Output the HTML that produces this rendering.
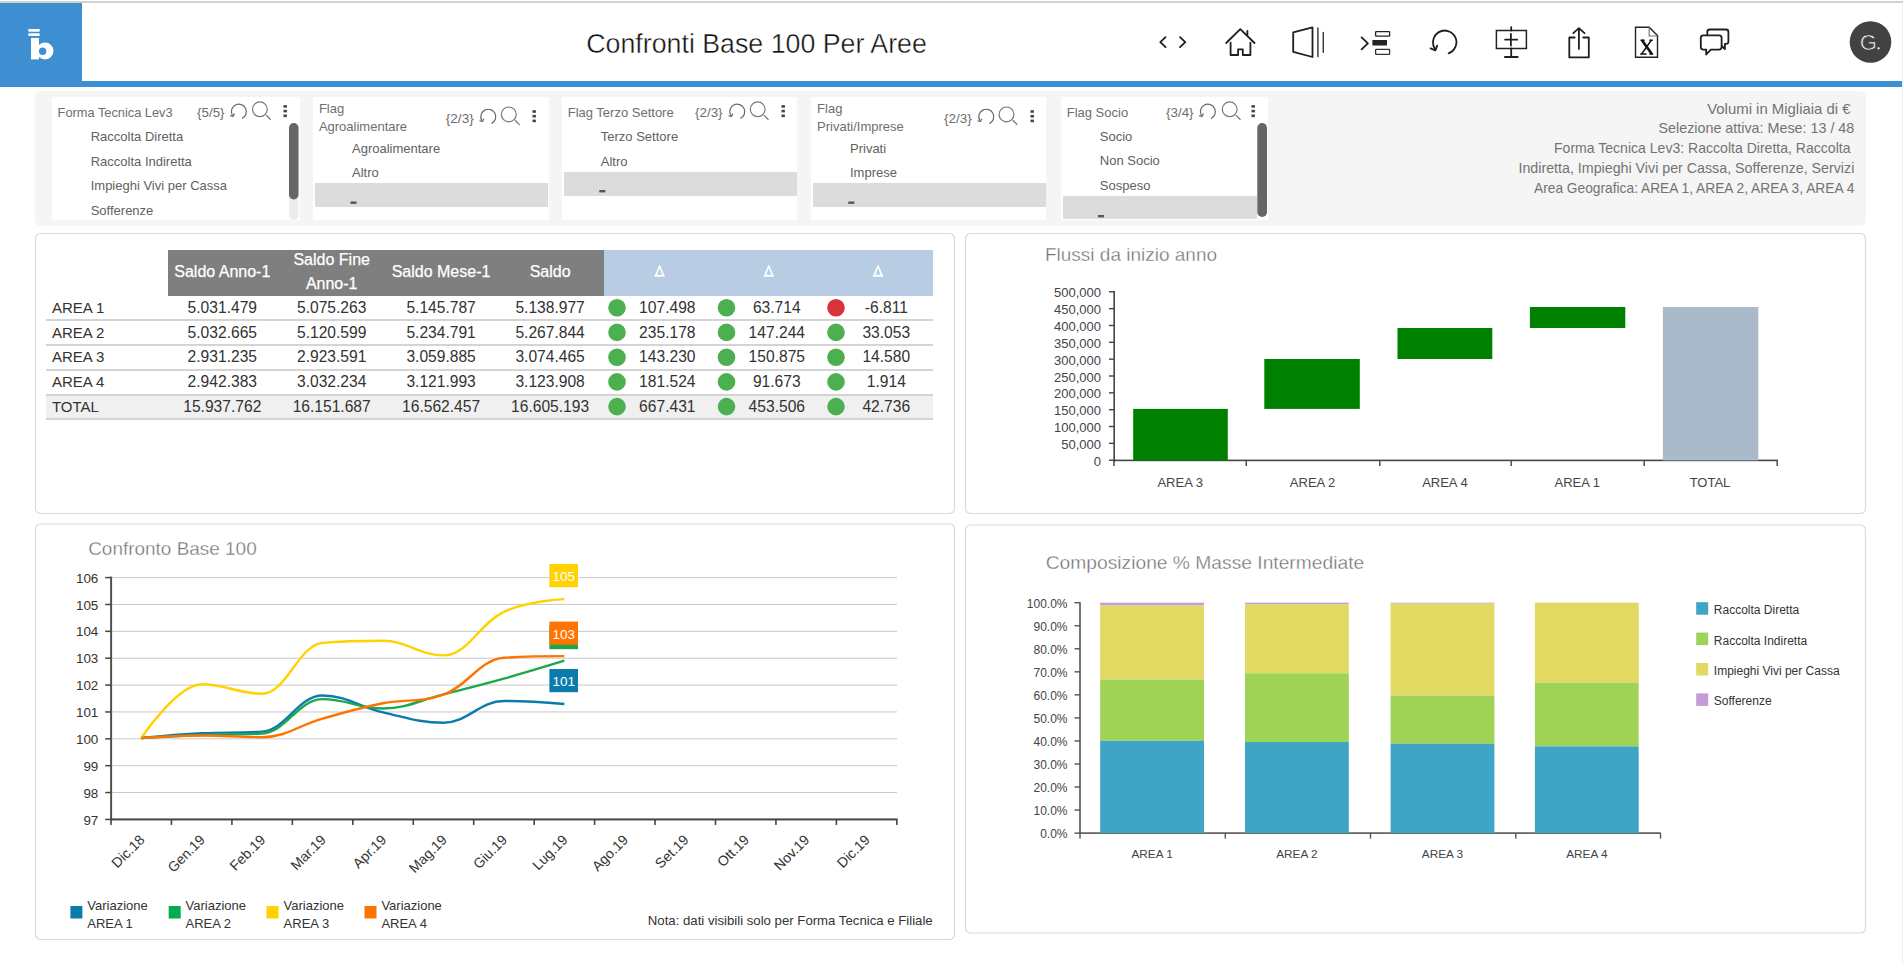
<!DOCTYPE html>
<html><head><meta charset="utf-8"><title>Confronti Base 100 Per Aree</title>
<style>
html,body{margin:0;padding:0;background:#fff;width:1903px;height:965px;overflow:hidden}
svg{position:absolute;left:0;top:0;font-family:"Liberation Sans", sans-serif}
</style></head><body>
<svg width="1903" height="965" viewBox="0 0 1903 965">
<rect x="0" y="1" width="1903" height="2" fill="#d3d0d0"/>
<rect x="0" y="3" width="82" height="78" fill="#3d8fd1"/>
<rect x="0" y="81" width="1903" height="6" fill="#3d8fd1"/>
<rect x="1902" y="3" width="1" height="962" fill="#f0f1f1"/>
<rect x="28.2" y="29.1" width="11.6" height="2.7" rx="1" fill="#fff"/>
<rect x="28.2" y="33.2" width="11.6" height="2.7" rx="1" fill="#fff"/>
<rect x="31" y="38" width="8" height="21.4" fill="#fff"/>
<circle cx="45" cy="51" r="8.5" fill="#fff"/>
<circle cx="42.6" cy="51.2" r="3.7" fill="#3d8fd1"/>
<text x="586.3" y="53" font-size="27" fill="#111" stroke="#fff" stroke-width="0.4" textLength="340.5" lengthAdjust="spacingAndGlyphs">Confronti Base 100 Per Aree</text>
<path d="M1165.6,37.2 L1160.3,42.2 L1165.6,47.2 M1180,37.2 L1185.3,42.2 L1180,47.2" fill="none" stroke="#1e1e1e" stroke-width="1.8" stroke-linecap="round" stroke-linejoin="round"/>
<path d="M1226.2,43 L1240.3,29.2 L1254.5,43 M1247.4,31 V35.5 M1230.6,42.7 V55 H1238.1 V49.4 H1242.8 V55 H1250.4 V42.7" fill="none" stroke="#1e1e1e" stroke-width="1.8" stroke-linecap="round" stroke-linejoin="round"/>
<path d="M1293.2,32.4 L1312.5,27.4 L1312.5,57 L1293.2,51.8 Z" fill="none" stroke="#1e1e1e" stroke-width="1.8" stroke-linecap="round" stroke-linejoin="round" stroke-width="1.6"/>
<path d="M1317.9,28 V56.4" stroke="#555" stroke-width="1.7" stroke-linecap="round"/>
<path d="M1323.3,32.4 V52.2" stroke="#333" stroke-width="1.4" stroke-linecap="round"/>
<path d="M1361.6,37.4 L1367.9,43.4 L1361.6,49.4" fill="none" stroke="#1e1e1e" stroke-width="1.8" stroke-linecap="round" stroke-linejoin="round" stroke-width="1.5" stroke="#333"/>
<rect x="1375.6" y="31.6" width="14" height="4.6" rx="0.6" fill="none" stroke="#222" stroke-width="1.3"/>
<rect x="1372.4" y="39.9" width="14.6" height="5.7" rx="0.5" fill="#222"/>
<rect x="1375.6" y="49.4" width="14" height="5" rx="0.6" fill="none" stroke="#333" stroke-width="1.3"/>
<path d="M1448.6,53.3 A11.7,11.7 0 1 0 1435.6,49.6" fill="none" stroke="#1e1e1e" stroke-width="1.8" stroke-linecap="round" stroke-linejoin="round"/>
<path d="M1430.6,48.4 L1435.3,50.3 L1437.2,45.6" fill="none" stroke="#1e1e1e" stroke-width="1.8" stroke-linecap="round" stroke-linejoin="round"/>
<rect x="1496.4" y="30.5" width="30" height="18" fill="none" stroke="#222" stroke-width="1.5"/>
<path d="M1511.2,27.2 V30.5 M1511.2,48.5 V57 M1504.9,57 H1517.7 M1505.1,39.7 H1517.2 M1510.9,34 V45.6" fill="none" stroke="#1e1e1e" stroke-width="1.8" stroke-linecap="round" stroke-linejoin="round" stroke-width="1.5"/>
<path d="M1574.7,37.5 H1569.3 V57.4 H1588.8 V37.5 H1583.2 M1578.9,28.4 V48.9 M1573.3,33.2 L1578.9,28.2 L1584.5,33.2" fill="none" stroke="#1e1e1e" stroke-width="1.8" stroke-linecap="round" stroke-linejoin="round" stroke-width="1.4" stroke="#333" stroke-linecap="butt"/>
<path d="M1635.5,27.2 H1649.2 L1657.5,35.5 V57.2 H1635.5 Z" fill="none" stroke="#222" stroke-width="1.4" stroke-linejoin="miter"/>
<path d="M1649.2,27.6 V36 H1657.2" fill="none" stroke="#777" stroke-width="1.2"/>
<path d="M1641.8,40 L1651.8,54" stroke="#111" stroke-width="2.6"/>
<path d="M1651.5,40 L1641.6,54" stroke="#111" stroke-width="1.4"/>
<path d="M1640.2,54 H1646.6 M1649.4,54 H1653.2 M1640.5,40.2 H1644.6 M1649.4,40.2 H1652.8" stroke="#111" stroke-width="1.4"/>
<path d="M1707.3,35.3 V32 Q1707.3,29.5 1709.8,29.5 H1726 Q1728.4,29.5 1728.4,32 V41.4 Q1728.4,43.8 1726,43.8 H1724.9 V49 L1721.8,46" fill="none" stroke="#1e1e1e" stroke-width="1.8" stroke-linecap="round" stroke-linejoin="round" stroke-width="1.5" stroke="#333"/>
<path d="M1703.3,35.3 H1719.1 Q1721.6,35.3 1721.6,37.8 V47.1 Q1721.6,49.6 1719.1,49.6 H1710.8 L1706.2,54.5 V49.6 H1703.3 Q1700.8,49.6 1700.8,47.1 V37.8 Q1700.8,35.3 1703.3,35.3 Z" fill="none" stroke="#1e1e1e" stroke-width="1.8" stroke-linecap="round" stroke-linejoin="round" stroke-width="1.5" stroke="#333"/>
<circle cx="1870.5" cy="42" r="20.8" fill="#424242"/>
<text x="1859.8" y="49.8" font-size="22" fill="#fff" stroke="#424242" stroke-width="0.7">G</text>
<circle cx="1878.6" cy="48.3" r="1.1" fill="#fff"/>
<rect x="35" y="91" width="1831" height="135" rx="6" fill="#f5f5f5"/>
<rect x="52" y="97" width="248" height="123" fill="#fff"/>
<rect x="313" y="97" width="236" height="123" fill="#fff"/>
<rect x="562" y="97" width="235" height="123" fill="#fff"/>
<rect x="811" y="97" width="235" height="123" fill="#fff"/>
<rect x="1061" y="97" width="207" height="123" fill="#fff"/>
<text x="57.6" y="117.3" font-size="12.8" fill="#6e6e6e" text-anchor="start" >Forma Tecnica Lev3</text>
<text x="197.1" y="116.9" font-size="12.8" fill="#6e6e6e" textLength="27.4" lengthAdjust="spacingAndGlyphs">{5/5}</text>
<path d="M242.0,118.5 A7.5,7.5 0 1 0 232.29999999999998,115.30000000000001" fill="none" stroke="#6a6a6a" stroke-width="1.2"/>
<path d="M230.2,115.60000000000001 L232.9,116.4 L234.5,113.7" fill="none" stroke="#6a6a6a" stroke-width="1.3"/>
<circle cx="259.9" cy="109.30000000000001" r="7.4" fill="none" stroke="#777" stroke-width="1.2"/>
<path d="M266.2,115.10000000000001 L270.7,119.80000000000001" stroke="#777" stroke-width="1.3"/>
<rect x="283.5" y="105.10000000000001" width="3.4" height="2.6" fill="#444"/>
<rect x="283.5" y="109.80000000000001" width="3.4" height="2.6" fill="#444"/>
<rect x="283.5" y="114.50000000000001" width="3.4" height="2.6" fill="#444"/>
<text x="90.7" y="141.0" font-size="13" fill="#616161" text-anchor="start" >Raccolta Diretta</text>
<text x="90.7" y="165.5" font-size="13" fill="#616161" text-anchor="start" >Raccolta Indiretta</text>
<text x="90.7" y="190.0" font-size="13" fill="#616161" text-anchor="start" >Impieghi Vivi per Cassa</text>
<text x="90.7" y="214.5" font-size="13" fill="#616161" text-anchor="start" >Sofferenze</text>
<rect x="289" y="123" width="9.5" height="97" rx="4.7" fill="#ececec"/>
<rect x="289" y="123" width="9.5" height="76.5" rx="4.7" fill="#666"/>
<text x="318.9" y="113.2" font-size="13" fill="#6e6e6e" text-anchor="start" >Flag</text>
<text x="318.9" y="130.6" font-size="13" fill="#6e6e6e" text-anchor="start" >Agroalimentare</text>
<text x="445.8" y="123" font-size="12.8" fill="#6e6e6e" textLength="27.9" lengthAdjust="spacingAndGlyphs">{2/3}</text>
<path d="M491.4,123.6 A7.5,7.5 0 1 0 481.7,120.4" fill="none" stroke="#6a6a6a" stroke-width="1.2"/>
<path d="M479.6,120.7 L482.3,121.5 L483.9,118.8" fill="none" stroke="#6a6a6a" stroke-width="1.3"/>
<circle cx="508.8" cy="114.4" r="7.4" fill="none" stroke="#777" stroke-width="1.2"/>
<path d="M515.1,120.2 L519.6,124.9" stroke="#777" stroke-width="1.3"/>
<rect x="532.5" y="110.2" width="3.4" height="2.6" fill="#444"/>
<rect x="532.5" y="114.9" width="3.4" height="2.6" fill="#444"/>
<rect x="532.5" y="119.60000000000001" width="3.4" height="2.6" fill="#444"/>
<rect x="315" y="183" width="233" height="24" fill="#dcdcdc"/>
<text x="352" y="152.7" font-size="13" fill="#616161" text-anchor="start" >Agroalimentare</text>
<text x="352" y="176.8" font-size="13" fill="#616161" text-anchor="start" >Altro</text>
<rect x="350.5" y="201.5" width="6" height="2.4" fill="#555"/>
<text x="567.7" y="116.8" font-size="13" fill="#6e6e6e" text-anchor="start" >Flag Terzo Settore</text>
<text x="695" y="116.9" font-size="12.8" fill="#6e6e6e" textLength="27.6" lengthAdjust="spacingAndGlyphs">{2/3}</text>
<path d="M740.4,118.5 A7.5,7.5 0 1 0 730.7,115.30000000000001" fill="none" stroke="#6a6a6a" stroke-width="1.2"/>
<path d="M728.6,115.60000000000001 L731.3,116.4 L732.9,113.7" fill="none" stroke="#6a6a6a" stroke-width="1.3"/>
<circle cx="757.7" cy="109.30000000000001" r="7.4" fill="none" stroke="#777" stroke-width="1.2"/>
<path d="M764.0,115.10000000000001 L768.5,119.80000000000001" stroke="#777" stroke-width="1.3"/>
<rect x="781.5" y="105.10000000000001" width="3.4" height="2.6" fill="#444"/>
<rect x="781.5" y="109.80000000000001" width="3.4" height="2.6" fill="#444"/>
<rect x="781.5" y="114.50000000000001" width="3.4" height="2.6" fill="#444"/>
<text x="600.8" y="140.8" font-size="13" fill="#616161" text-anchor="start" >Terzo Settore</text>
<text x="600.8" y="165.5" font-size="13" fill="#616161" text-anchor="start" >Altro</text>
<rect x="564" y="172" width="233" height="24" fill="#dcdcdc"/>
<rect x="599.3" y="190" width="6" height="2.4" fill="#555"/>
<text x="817.1" y="113.2" font-size="13" fill="#6e6e6e" text-anchor="start" >Flag</text>
<text x="817.1" y="130.6" font-size="13" fill="#6e6e6e" text-anchor="start" >Privati/Imprese</text>
<text x="944" y="123" font-size="12.8" fill="#6e6e6e" textLength="27.9" lengthAdjust="spacingAndGlyphs">{2/3}</text>
<path d="M989.4,123.6 A7.5,7.5 0 1 0 979.7,120.4" fill="none" stroke="#6a6a6a" stroke-width="1.2"/>
<path d="M977.6,120.7 L980.3,121.5 L981.9,118.8" fill="none" stroke="#6a6a6a" stroke-width="1.3"/>
<circle cx="1006.5" cy="114.4" r="7.4" fill="none" stroke="#777" stroke-width="1.2"/>
<path d="M1012.8,120.2 L1017.3,124.9" stroke="#777" stroke-width="1.3"/>
<rect x="1030.5" y="110.2" width="3.4" height="2.6" fill="#444"/>
<rect x="1030.5" y="114.9" width="3.4" height="2.6" fill="#444"/>
<rect x="1030.5" y="119.60000000000001" width="3.4" height="2.6" fill="#444"/>
<rect x="813" y="183" width="233" height="24" fill="#dcdcdc"/>
<text x="850" y="152.7" font-size="13" fill="#616161" text-anchor="start" >Privati</text>
<text x="850" y="176.8" font-size="13" fill="#616161" text-anchor="start" >Imprese</text>
<rect x="848.3" y="201.5" width="6" height="2.4" fill="#555"/>
<text x="1066.7" y="116.8" font-size="13" fill="#6e6e6e" text-anchor="start" >Flag Socio</text>
<text x="1166" y="116.9" font-size="12.8" fill="#6e6e6e" textLength="27.6" lengthAdjust="spacingAndGlyphs">{3/4}</text>
<path d="M1211.0,118.5 A7.5,7.5 0 1 0 1201.3,115.30000000000001" fill="none" stroke="#6a6a6a" stroke-width="1.2"/>
<path d="M1199.1999999999998,115.60000000000001 L1201.8999999999999,116.4 L1203.5,113.7" fill="none" stroke="#6a6a6a" stroke-width="1.3"/>
<circle cx="1229.7" cy="109.30000000000001" r="7.4" fill="none" stroke="#777" stroke-width="1.2"/>
<path d="M1236.0,115.10000000000001 L1240.5,119.80000000000001" stroke="#777" stroke-width="1.3"/>
<rect x="1251.5" y="105.10000000000001" width="3.4" height="2.6" fill="#444"/>
<rect x="1251.5" y="109.80000000000001" width="3.4" height="2.6" fill="#444"/>
<rect x="1251.5" y="114.50000000000001" width="3.4" height="2.6" fill="#444"/>
<rect x="1063" y="196" width="194" height="23" fill="#dcdcdc"/>
<text x="1099.8" y="140.8" font-size="13" fill="#616161" text-anchor="start" >Socio</text>
<text x="1099.8" y="165.4" font-size="13" fill="#616161" text-anchor="start" >Non Socio</text>
<text x="1099.8" y="190.0" font-size="13" fill="#616161" text-anchor="start" >Sospeso</text>
<rect x="1098" y="215" width="6" height="2.4" fill="#555"/>
<rect x="1257.3" y="123" width="9.7" height="94" rx="4.8" fill="#666"/>
<text x="1707.2" y="113.5" font-size="14.2" fill="#737373" textLength="143.4" lengthAdjust="spacingAndGlyphs">Volumi in Migliaia di €</text>
<text x="1658.5" y="133.3" font-size="14.2" fill="#737373" textLength="195.8" lengthAdjust="spacingAndGlyphs">Selezione attiva: Mese: 13 / 48</text>
<text x="1554" y="153.1" font-size="14.2" fill="#737373" textLength="296.5" lengthAdjust="spacingAndGlyphs">Forma Tecnica Lev3: Raccolta Diretta, Raccolta</text>
<text x="1518.5" y="172.9" font-size="14.2" fill="#737373" textLength="335.8" lengthAdjust="spacingAndGlyphs">Indiretta, Impieghi Vivi per Cassa, Sofferenze, Servizi</text>
<text x="1534" y="192.7" font-size="14.2" fill="#737373" textLength="320.3" lengthAdjust="spacingAndGlyphs">Area Geografica: AREA 1, AREA 2, AREA 3, AREA 4</text>
<rect x="35.5" y="233.5" width="919" height="280" rx="5" fill="#fff" stroke="#dadada" stroke-width="1.2"/>
<rect x="965.5" y="233.5" width="900" height="280" rx="5" fill="#fff" stroke="#dadada" stroke-width="1.2"/>
<rect x="35.5" y="524" width="919" height="415.5" rx="5" fill="#fff" stroke="#dadada" stroke-width="1.2"/>
<rect x="965.5" y="525" width="900" height="408" rx="5" fill="#fff" stroke="#dadada" stroke-width="1.2"/>
<rect x="168" y="250" width="436" height="46" fill="#7f7f7f"/>
<rect x="604" y="250" width="329" height="46" fill="#b8cce4"/>
<text x="222.3" y="277" font-size="16" text-anchor="middle" fill="#fff" stroke="#fff" stroke-width="0.25">Saldo Anno-1</text>
<text x="331.7" y="264.8" font-size="16" text-anchor="middle" fill="#fff" stroke="#fff" stroke-width="0.25">Saldo Fine</text>
<text x="331.7" y="288.8" font-size="16" text-anchor="middle" fill="#fff" stroke="#fff" stroke-width="0.25">Anno-1</text>
<text x="441" y="277" font-size="16" text-anchor="middle" fill="#fff" stroke="#fff" stroke-width="0.25">Saldo Mese-1</text>
<text x="550.1" y="277" font-size="16" text-anchor="middle" fill="#fff" stroke="#fff" stroke-width="0.25">Saldo</text>
<path d="M654.2,276.7 L659.2,264.9 L660.0,264.9 L665.0,276.7 Z M656.9,274.7 L662.3000000000001,274.7 L659.6,268.2 Z" fill="#fff" fill-rule="evenodd"/>
<path d="M763.4,276.7 L768.4,264.9 L769.1999999999999,264.9 L774.1999999999999,276.7 Z M766.0999999999999,274.7 L771.5,274.7 L768.8,268.2 Z" fill="#fff" fill-rule="evenodd"/>
<path d="M872.6,276.7 L877.6,264.9 L878.4,264.9 L883.4,276.7 Z M875.3,274.7 L880.7,274.7 L878,268.2 Z" fill="#fff" fill-rule="evenodd"/>
<rect x="46" y="396" width="887" height="22" fill="#f0f0f0"/>
<rect x="46" y="319" width="887" height="2" fill="#d4d4d4"/>
<rect x="46" y="344" width="887" height="2" fill="#d4d4d4"/>
<rect x="46" y="369" width="887" height="2" fill="#d4d4d4"/>
<rect x="46" y="394" width="887" height="2" fill="#d4d4d4"/>
<rect x="46" y="418" width="887" height="2" fill="#d4d4d4"/>
<text x="51.9" y="312.9" font-size="15" fill="#333" text-anchor="start" >AREA 1</text>
<text x="222.3" y="312.9" font-size="15.6" fill="#333" text-anchor="middle" >5.031.479</text>
<text x="331.7" y="312.9" font-size="15.6" fill="#333" text-anchor="middle" >5.075.263</text>
<text x="441.1" y="312.9" font-size="15.6" fill="#333" text-anchor="middle" >5.145.787</text>
<text x="550.1" y="312.9" font-size="15.6" fill="#333" text-anchor="middle" >5.138.977</text>
<circle cx="617" cy="307.7" r="8.8" fill="#4caf50"/>
<text x="667.3" y="312.9" font-size="15.6" fill="#333" text-anchor="middle" >107.498</text>
<circle cx="726.5" cy="307.7" r="8.8" fill="#4caf50"/>
<text x="776.8" y="312.9" font-size="15.6" fill="#333" text-anchor="middle" >63.714</text>
<circle cx="836" cy="307.7" r="8.8" fill="#d9323a"/>
<text x="886.3" y="312.9" font-size="15.6" fill="#333" text-anchor="middle" >-6.811</text>
<text x="51.9" y="337.6" font-size="15" fill="#333" text-anchor="start" >AREA 2</text>
<text x="222.3" y="337.6" font-size="15.6" fill="#333" text-anchor="middle" >5.032.665</text>
<text x="331.7" y="337.6" font-size="15.6" fill="#333" text-anchor="middle" >5.120.599</text>
<text x="441.1" y="337.6" font-size="15.6" fill="#333" text-anchor="middle" >5.234.791</text>
<text x="550.1" y="337.6" font-size="15.6" fill="#333" text-anchor="middle" >5.267.844</text>
<circle cx="617" cy="332.40000000000003" r="8.8" fill="#4caf50"/>
<text x="667.3" y="337.6" font-size="15.6" fill="#333" text-anchor="middle" >235.178</text>
<circle cx="726.5" cy="332.40000000000003" r="8.8" fill="#4caf50"/>
<text x="776.8" y="337.6" font-size="15.6" fill="#333" text-anchor="middle" >147.244</text>
<circle cx="836" cy="332.40000000000003" r="8.8" fill="#4caf50"/>
<text x="886.3" y="337.6" font-size="15.6" fill="#333" text-anchor="middle" >33.053</text>
<text x="51.9" y="362.4" font-size="15" fill="#333" text-anchor="start" >AREA 3</text>
<text x="222.3" y="362.4" font-size="15.6" fill="#333" text-anchor="middle" >2.931.235</text>
<text x="331.7" y="362.4" font-size="15.6" fill="#333" text-anchor="middle" >2.923.591</text>
<text x="441.1" y="362.4" font-size="15.6" fill="#333" text-anchor="middle" >3.059.885</text>
<text x="550.1" y="362.4" font-size="15.6" fill="#333" text-anchor="middle" >3.074.465</text>
<circle cx="617" cy="357.2" r="8.8" fill="#4caf50"/>
<text x="667.3" y="362.4" font-size="15.6" fill="#333" text-anchor="middle" >143.230</text>
<circle cx="726.5" cy="357.2" r="8.8" fill="#4caf50"/>
<text x="776.8" y="362.4" font-size="15.6" fill="#333" text-anchor="middle" >150.875</text>
<circle cx="836" cy="357.2" r="8.8" fill="#4caf50"/>
<text x="886.3" y="362.4" font-size="15.6" fill="#333" text-anchor="middle" >14.580</text>
<text x="51.9" y="387.1" font-size="15" fill="#333" text-anchor="start" >AREA 4</text>
<text x="222.3" y="387.1" font-size="15.6" fill="#333" text-anchor="middle" >2.942.383</text>
<text x="331.7" y="387.1" font-size="15.6" fill="#333" text-anchor="middle" >3.032.234</text>
<text x="441.1" y="387.1" font-size="15.6" fill="#333" text-anchor="middle" >3.121.993</text>
<text x="550.1" y="387.1" font-size="15.6" fill="#333" text-anchor="middle" >3.123.908</text>
<circle cx="617" cy="381.90000000000003" r="8.8" fill="#4caf50"/>
<text x="667.3" y="387.1" font-size="15.6" fill="#333" text-anchor="middle" >181.524</text>
<circle cx="726.5" cy="381.90000000000003" r="8.8" fill="#4caf50"/>
<text x="776.8" y="387.1" font-size="15.6" fill="#333" text-anchor="middle" >91.673</text>
<circle cx="836" cy="381.90000000000003" r="8.8" fill="#4caf50"/>
<text x="886.3" y="387.1" font-size="15.6" fill="#333" text-anchor="middle" >1.914</text>
<text x="51.9" y="411.8" font-size="15" fill="#333" text-anchor="start" >TOTAL</text>
<text x="222.3" y="411.8" font-size="15.6" fill="#333" text-anchor="middle" >15.937.762</text>
<text x="331.7" y="411.8" font-size="15.6" fill="#333" text-anchor="middle" >16.151.687</text>
<text x="441.1" y="411.8" font-size="15.6" fill="#333" text-anchor="middle" >16.562.457</text>
<text x="550.1" y="411.8" font-size="15.6" fill="#333" text-anchor="middle" >16.605.193</text>
<circle cx="617" cy="406.6" r="8.8" fill="#4caf50"/>
<text x="667.3" y="411.8" font-size="15.6" fill="#333" text-anchor="middle" >667.431</text>
<circle cx="726.5" cy="406.6" r="8.8" fill="#4caf50"/>
<text x="776.8" y="411.8" font-size="15.6" fill="#333" text-anchor="middle" >453.506</text>
<circle cx="836" cy="406.6" r="8.8" fill="#4caf50"/>
<text x="886.3" y="411.8" font-size="15.6" fill="#333" text-anchor="middle" >42.736</text>
<text x="1045" y="261.2" font-size="19" fill="#707070" stroke="#fff" stroke-width="0.35" textLength="172" lengthAdjust="spacingAndGlyphs">Flussi da inizio anno</text>
<rect x="1113.4" y="291" width="1.6" height="170.5" fill="#444"/>
<rect x="1113.4" y="459.6" width="664.5" height="1.6" fill="#444"/>
<rect x="1109" y="291.10" width="5" height="1.4" fill="#444"/>
<text x="1101" y="297.30" font-size="13" fill="#444" text-anchor="end" >500,000</text>
<rect x="1109" y="307.94" width="5" height="1.4" fill="#444"/>
<text x="1101" y="314.14" font-size="13" fill="#444" text-anchor="end" >450,000</text>
<rect x="1109" y="324.78" width="5" height="1.4" fill="#444"/>
<text x="1101" y="330.98" font-size="13" fill="#444" text-anchor="end" >400,000</text>
<rect x="1109" y="341.62" width="5" height="1.4" fill="#444"/>
<text x="1101" y="347.82" font-size="13" fill="#444" text-anchor="end" >350,000</text>
<rect x="1109" y="358.46" width="5" height="1.4" fill="#444"/>
<text x="1101" y="364.66" font-size="13" fill="#444" text-anchor="end" >300,000</text>
<rect x="1109" y="375.30" width="5" height="1.4" fill="#444"/>
<text x="1101" y="381.50" font-size="13" fill="#444" text-anchor="end" >250,000</text>
<rect x="1109" y="392.14" width="5" height="1.4" fill="#444"/>
<text x="1101" y="398.34" font-size="13" fill="#444" text-anchor="end" >200,000</text>
<rect x="1109" y="408.98" width="5" height="1.4" fill="#444"/>
<text x="1101" y="415.18" font-size="13" fill="#444" text-anchor="end" >150,000</text>
<rect x="1109" y="425.82" width="5" height="1.4" fill="#444"/>
<text x="1101" y="432.02" font-size="13" fill="#444" text-anchor="end" >100,000</text>
<rect x="1109" y="442.66" width="5" height="1.4" fill="#444"/>
<text x="1101" y="448.86" font-size="13" fill="#444" text-anchor="end" >50,000</text>
<rect x="1109" y="459.50" width="5" height="1.4" fill="#444"/>
<text x="1101" y="465.70" font-size="13" fill="#444" text-anchor="end" >0</text>
<rect x="1113.3" y="460" width="1.4" height="6" fill="#444"/>
<rect x="1245.6" y="460" width="1.4" height="6" fill="#444"/>
<rect x="1379.1" y="460" width="1.4" height="6" fill="#444"/>
<rect x="1510.5" y="460" width="1.4" height="6" fill="#444"/>
<rect x="1643.5" y="460" width="1.4" height="6" fill="#444"/>
<rect x="1776.5" y="460" width="1.4" height="6" fill="#444"/>
<rect x="1133.2" y="408.9" width="94.6" height="51.5" fill="#008000"/>
<rect x="1264.3" y="359" width="95.5" height="49.9" fill="#008000"/>
<rect x="1397.5" y="328" width="94.8" height="31.0" fill="#008000"/>
<rect x="1529.9" y="307" width="95.4" height="21.0" fill="#008000"/>
<rect x="1662.9" y="307" width="95.4" height="153.4" fill="#aabacb"/>
<text x="1180.2" y="486.7" font-size="13" fill="#444" text-anchor="middle" >AREA 3</text>
<text x="1312.6" y="486.7" font-size="13" fill="#444" text-anchor="middle" >AREA 2</text>
<text x="1444.9" y="486.7" font-size="13" fill="#444" text-anchor="middle" >AREA 4</text>
<text x="1577.3" y="486.7" font-size="13" fill="#444" text-anchor="middle" >AREA 1</text>
<text x="1710" y="486.7" font-size="13" fill="#444" text-anchor="middle" >TOTAL</text>
<text x="88.2" y="554.8" font-size="19" fill="#707070" stroke="#fff" stroke-width="0.35" textLength="168.5" lengthAdjust="spacingAndGlyphs">Confronto Base 100</text>
<rect x="112" y="577.10" width="785" height="1" fill="#c8c8c8"/>
<rect x="105.2" y="576.85" width="6" height="1.5" fill="#444"/>
<text x="98.3" y="582.70" font-size="13.4" fill="#333" text-anchor="end" >106</text>
<rect x="112" y="603.97" width="785" height="1" fill="#c8c8c8"/>
<rect x="105.2" y="603.72" width="6" height="1.5" fill="#444"/>
<text x="98.3" y="609.57" font-size="13.4" fill="#333" text-anchor="end" >105</text>
<rect x="112" y="630.84" width="785" height="1" fill="#c8c8c8"/>
<rect x="105.2" y="630.59" width="6" height="1.5" fill="#444"/>
<text x="98.3" y="636.44" font-size="13.4" fill="#333" text-anchor="end" >104</text>
<rect x="112" y="657.71" width="785" height="1" fill="#c8c8c8"/>
<rect x="105.2" y="657.46" width="6" height="1.5" fill="#444"/>
<text x="98.3" y="663.31" font-size="13.4" fill="#333" text-anchor="end" >103</text>
<rect x="112" y="684.58" width="785" height="1" fill="#c8c8c8"/>
<rect x="105.2" y="684.33" width="6" height="1.5" fill="#444"/>
<text x="98.3" y="690.18" font-size="13.4" fill="#333" text-anchor="end" >102</text>
<rect x="112" y="711.45" width="785" height="1" fill="#c8c8c8"/>
<rect x="105.2" y="711.20" width="6" height="1.5" fill="#444"/>
<text x="98.3" y="717.05" font-size="13.4" fill="#333" text-anchor="end" >101</text>
<rect x="112" y="738.32" width="785" height="1" fill="#c8c8c8"/>
<rect x="105.2" y="738.07" width="6" height="1.5" fill="#444"/>
<text x="98.3" y="743.92" font-size="13.4" fill="#333" text-anchor="end" >100</text>
<rect x="112" y="765.19" width="785" height="1" fill="#c8c8c8"/>
<rect x="105.2" y="764.94" width="6" height="1.5" fill="#444"/>
<text x="98.3" y="770.79" font-size="13.4" fill="#333" text-anchor="end" >99</text>
<rect x="112" y="792.06" width="785" height="1" fill="#c8c8c8"/>
<rect x="105.2" y="791.81" width="6" height="1.5" fill="#444"/>
<text x="98.3" y="797.66" font-size="13.4" fill="#333" text-anchor="end" >98</text>
<rect x="105.2" y="818.68" width="6" height="1.5" fill="#444"/>
<text x="98.3" y="824.53" font-size="13.4" fill="#333" text-anchor="end" >97</text>
<rect x="110.1" y="576.60" width="2" height="242.83" fill="#505050"/>
<rect x="110" y="818.43" width="787.5" height="2" fill="#444"/>
<rect x="110.20" y="819.43" width="1.6" height="5.5" fill="#444"/>
<rect x="170.65" y="819.43" width="1.6" height="5.5" fill="#444"/>
<rect x="231.10" y="819.43" width="1.6" height="5.5" fill="#444"/>
<rect x="291.55" y="819.43" width="1.6" height="5.5" fill="#444"/>
<rect x="352.00" y="819.43" width="1.6" height="5.5" fill="#444"/>
<rect x="412.45" y="819.43" width="1.6" height="5.5" fill="#444"/>
<rect x="472.90" y="819.43" width="1.6" height="5.5" fill="#444"/>
<rect x="533.35" y="819.43" width="1.6" height="5.5" fill="#444"/>
<rect x="593.80" y="819.43" width="1.6" height="5.5" fill="#444"/>
<rect x="654.25" y="819.43" width="1.6" height="5.5" fill="#444"/>
<rect x="714.70" y="819.43" width="1.6" height="5.5" fill="#444"/>
<rect x="775.15" y="819.43" width="1.6" height="5.5" fill="#444"/>
<rect x="835.60" y="819.43" width="1.6" height="5.5" fill="#444"/>
<rect x="896.05" y="819.43" width="1.6" height="5.5" fill="#444"/>
<text x="145.42" y="840.7" font-size="14" fill="#333" text-anchor="end" transform="rotate(-45 145.42 840.7)">Dic.18</text>
<text x="205.88" y="840.7" font-size="14" fill="#333" text-anchor="end" transform="rotate(-45 205.88 840.7)">Gen.19</text>
<text x="266.32" y="840.7" font-size="14" fill="#333" text-anchor="end" transform="rotate(-45 266.32 840.7)">Feb.19</text>
<text x="326.78" y="840.7" font-size="14" fill="#333" text-anchor="end" transform="rotate(-45 326.78 840.7)">Mar.19</text>
<text x="387.23" y="840.7" font-size="14" fill="#333" text-anchor="end" transform="rotate(-45 387.23 840.7)">Apr.19</text>
<text x="447.68" y="840.7" font-size="14" fill="#333" text-anchor="end" transform="rotate(-45 447.68 840.7)">Mag.19</text>
<text x="508.12" y="840.7" font-size="14" fill="#333" text-anchor="end" transform="rotate(-45 508.12 840.7)">Giu.19</text>
<text x="568.58" y="840.7" font-size="14" fill="#333" text-anchor="end" transform="rotate(-45 568.58 840.7)">Lug.19</text>
<text x="629.03" y="840.7" font-size="14" fill="#333" text-anchor="end" transform="rotate(-45 629.03 840.7)">Ago.19</text>
<text x="689.48" y="840.7" font-size="14" fill="#333" text-anchor="end" transform="rotate(-45 689.48 840.7)">Set.19</text>
<text x="749.93" y="840.7" font-size="14" fill="#333" text-anchor="end" transform="rotate(-45 749.93 840.7)">Ott.19</text>
<text x="810.38" y="840.7" font-size="14" fill="#333" text-anchor="end" transform="rotate(-45 810.38 840.7)">Nov.19</text>
<text x="870.83" y="840.7" font-size="14" fill="#333" text-anchor="end" transform="rotate(-45 870.83 840.7)">Dic.19</text>
<path d="M141.20,738.00 C141.20,738.00 177.47,734.58 201.65,733.30 C225.83,732.02 237.92,733.30 262.10,731.60 C286.28,729.90 298.37,695.50 322.55,695.50 C346.73,695.50 358.82,706.86 383.00,712.30 C407.18,717.74 419.27,722.70 443.45,722.70 C467.63,722.70 479.72,701.00 503.90,701.00 C528.08,701.00 564.35,704.00 564.35,704.00" fill="none" stroke="#0b7bab" stroke-width="2.4"/>
<path d="M141.20,738.00 C141.20,738.00 177.47,735.88 201.65,735.00 C225.83,734.12 237.92,735.00 262.10,733.60 C286.28,732.20 298.37,699.10 322.55,699.10 C346.73,699.10 358.82,708.50 383.00,708.50 C407.18,708.50 419.27,700.28 443.45,694.30 C467.63,688.32 479.72,685.32 503.90,678.60 C528.08,671.88 564.35,660.70 564.35,660.70" fill="none" stroke="#1da64b" stroke-width="2.4"/>
<path d="M141.20,738.00 C141.20,738.00 177.47,684.30 201.65,684.30 C225.83,684.30 237.92,693.70 262.10,693.70 C286.28,693.70 298.37,645.00 322.55,642.90 C346.73,640.80 358.82,640.80 383.00,640.80 C407.18,640.80 419.27,655.40 443.45,655.40 C467.63,655.40 479.72,623.06 503.90,611.80 C528.08,600.54 564.35,599.10 564.35,599.10" fill="none" stroke="#ffd200" stroke-width="2.4"/>
<path d="M141.20,738.00 C141.20,738.00 177.47,735.50 201.65,735.50 C225.83,735.50 237.92,737.20 262.10,737.20 C286.28,737.20 298.37,725.38 322.55,718.60 C346.73,711.82 358.82,708.08 383.00,703.30 C407.18,698.52 419.27,703.30 443.45,694.70 C467.63,686.10 479.72,659.50 503.90,657.80 C528.08,656.10 564.35,656.10 564.35,656.10" fill="none" stroke="#ff7400" stroke-width="2.4"/>
<rect x="549.4" y="564" width="28.6" height="23.2" fill="#ffd200"/>
<text x="563.7" y="581.3" font-size="13.5" fill="#fff" text-anchor="middle" >105</text>
<rect x="549.4" y="626" width="28.6" height="23.2" fill="#1da64b"/>
<rect x="549.4" y="621.6" width="28.6" height="23.2" fill="#ff7400"/>
<text x="563.7" y="638.9" font-size="13.5" fill="#fff" text-anchor="middle" >103</text>
<rect x="549.4" y="669" width="28.6" height="23.2" fill="#0b7bab"/>
<text x="563.7" y="686.3" font-size="13.5" fill="#fff" text-anchor="middle" >101</text>
<rect x="70.4" y="906" width="12" height="12.5" fill="#0b7bab"/>
<text x="87.3" y="910.4" font-size="13" fill="#333" text-anchor="start" >Variazione</text>
<text x="87.3" y="927.7" font-size="13" fill="#333" text-anchor="start" >AREA 1</text>
<rect x="168.7" y="906" width="12" height="12.5" fill="#00ac4e"/>
<text x="185.5" y="910.4" font-size="13" fill="#333" text-anchor="start" >Variazione</text>
<text x="185.5" y="927.7" font-size="13" fill="#333" text-anchor="start" >AREA 2</text>
<rect x="266.5" y="906" width="12" height="12.5" fill="#ffd200"/>
<text x="283.6" y="910.4" font-size="13" fill="#333" text-anchor="start" >Variazione</text>
<text x="283.6" y="927.7" font-size="13" fill="#333" text-anchor="start" >AREA 3</text>
<rect x="364.5" y="906" width="12" height="12.5" fill="#ff7400"/>
<text x="381.4" y="910.4" font-size="13" fill="#333" text-anchor="start" >Variazione</text>
<text x="381.4" y="927.7" font-size="13" fill="#333" text-anchor="start" >AREA 4</text>
<text x="932.7" y="924.5" font-size="13.2" fill="#333" text-anchor="end" >Nota: dati visibili solo per Forma Tecnica e Filiale</text>
<text x="1045.7" y="568.6" font-size="19.2" fill="#707070" stroke="#fff" stroke-width="0.35" textLength="318.5" lengthAdjust="spacingAndGlyphs">Composizione % Masse Intermediate</text>
<rect x="1079.2" y="602.20" width="1.6" height="231.40" fill="#555"/>
<rect x="1079.2" y="832.30" width="581.5" height="1.6" fill="#555"/>
<rect x="1074.5" y="602.00" width="5.5" height="1.4" fill="#555"/>
<text x="1067.5" y="607.70" font-size="12" fill="#444" text-anchor="end" >100.0%</text>
<rect x="1074.5" y="625.04" width="5.5" height="1.4" fill="#555"/>
<text x="1067.5" y="630.74" font-size="12" fill="#444" text-anchor="end" >90.0%</text>
<rect x="1074.5" y="648.08" width="5.5" height="1.4" fill="#555"/>
<text x="1067.5" y="653.78" font-size="12" fill="#444" text-anchor="end" >80.0%</text>
<rect x="1074.5" y="671.12" width="5.5" height="1.4" fill="#555"/>
<text x="1067.5" y="676.82" font-size="12" fill="#444" text-anchor="end" >70.0%</text>
<rect x="1074.5" y="694.16" width="5.5" height="1.4" fill="#555"/>
<text x="1067.5" y="699.86" font-size="12" fill="#444" text-anchor="end" >60.0%</text>
<rect x="1074.5" y="717.20" width="5.5" height="1.4" fill="#555"/>
<text x="1067.5" y="722.90" font-size="12" fill="#444" text-anchor="end" >50.0%</text>
<rect x="1074.5" y="740.24" width="5.5" height="1.4" fill="#555"/>
<text x="1067.5" y="745.94" font-size="12" fill="#444" text-anchor="end" >40.0%</text>
<rect x="1074.5" y="763.28" width="5.5" height="1.4" fill="#555"/>
<text x="1067.5" y="768.98" font-size="12" fill="#444" text-anchor="end" >30.0%</text>
<rect x="1074.5" y="786.32" width="5.5" height="1.4" fill="#555"/>
<text x="1067.5" y="792.02" font-size="12" fill="#444" text-anchor="end" >20.0%</text>
<rect x="1074.5" y="809.36" width="5.5" height="1.4" fill="#555"/>
<text x="1067.5" y="815.06" font-size="12" fill="#444" text-anchor="end" >10.0%</text>
<rect x="1074.5" y="832.40" width="5.5" height="1.4" fill="#555"/>
<text x="1067.5" y="838.10" font-size="12" fill="#444" text-anchor="end" >0.0%</text>
<rect x="1079.30" y="833.10" width="1.4" height="5.5" fill="#555"/>
<rect x="1224.60" y="833.10" width="1.4" height="5.5" fill="#555"/>
<rect x="1369.80" y="833.10" width="1.4" height="5.5" fill="#555"/>
<rect x="1515.10" y="833.10" width="1.4" height="5.5" fill="#555"/>
<rect x="1659.80" y="833.10" width="1.4" height="5.5" fill="#555"/>
<rect x="1100.2" y="602.70" width="103.8" height="2.80" fill="#c49cdc"/>
<rect x="1100.2" y="605.50" width="103.8" height="74.00" fill="#e1d962"/>
<rect x="1100.2" y="679.50" width="103.8" height="61.30" fill="#9ed356"/>
<rect x="1100.2" y="740.80" width="103.8" height="92.30" fill="#40a4c4"/>
<rect x="1245.0" y="602.70" width="103.8" height="1.60" fill="#c49cdc"/>
<rect x="1245.0" y="604.20" width="103.8" height="69.10" fill="#e1d962"/>
<rect x="1245.0" y="673.30" width="103.8" height="68.70" fill="#9ed356"/>
<rect x="1245.0" y="742.00" width="103.8" height="91.10" fill="#40a4c4"/>
<rect x="1390.6" y="602.70" width="103.8" height="1.00" fill="#c49cdc"/>
<rect x="1390.6" y="603.60" width="103.8" height="92.00" fill="#e1d962"/>
<rect x="1390.6" y="695.60" width="103.8" height="48.20" fill="#9ed356"/>
<rect x="1390.6" y="743.80" width="103.8" height="89.30" fill="#40a4c4"/>
<rect x="1534.9" y="602.70" width="103.8" height="79.90" fill="#e1d962"/>
<rect x="1534.9" y="682.60" width="103.8" height="63.80" fill="#9ed356"/>
<rect x="1534.9" y="746.40" width="103.8" height="86.70" fill="#40a4c4"/>
<text x="1152.1" y="858" font-size="11.8" fill="#444" text-anchor="middle" >AREA 1</text>
<text x="1296.9" y="858" font-size="11.8" fill="#444" text-anchor="middle" >AREA 2</text>
<text x="1442.5" y="858" font-size="11.8" fill="#444" text-anchor="middle" >AREA 3</text>
<text x="1586.8" y="858" font-size="11.8" fill="#444" text-anchor="middle" >AREA 4</text>
<rect x="1696.2" y="602.2" width="12" height="12.5" fill="#40a4c4"/>
<text x="1713.8" y="614.1" font-size="12" fill="#333" text-anchor="start" >Raccolta Diretta</text>
<rect x="1696.2" y="632.6" width="12" height="12.5" fill="#9ed356"/>
<text x="1713.8" y="644.5" font-size="12" fill="#333" text-anchor="start" >Raccolta Indiretta</text>
<rect x="1696.2" y="663.0" width="12" height="12.5" fill="#e1d962"/>
<text x="1713.8" y="674.9" font-size="12" fill="#333" text-anchor="start" >Impieghi Vivi per Cassa</text>
<rect x="1696.2" y="693.4" width="12" height="12.5" fill="#c49cdc"/>
<text x="1713.8" y="705.3" font-size="12" fill="#333" text-anchor="start" >Sofferenze</text>
</svg>
</body></html>
